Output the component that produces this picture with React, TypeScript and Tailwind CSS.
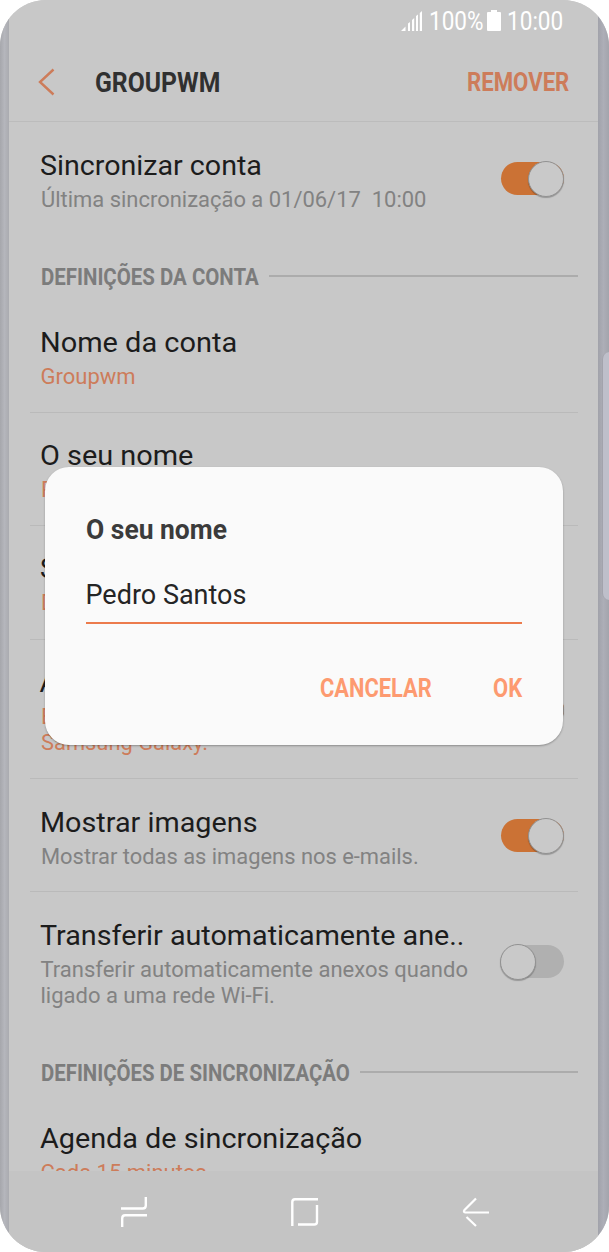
import { FC, ReactNode, useLayoutEffect, useRef, useState } from "react";
import clsx from "clsx";

interface FitTextProps {
  width: number;
  className?: string;
  children: ReactNode;
}

// Narrows or widens a single line of text to the given width
const FitText: FC<FitTextProps> = ({ width, className, children }) => {
  const ref = useRef<HTMLSpanElement>(null);
  const [scale, setScale] = useState(1);

  useLayoutEffect(() => {
    if (ref.current) {
      setScale(width / ref.current.offsetWidth);
    }
  }, [width]);

  return (
    <div className={clsx("whitespace-pre", className)} style={{ width }}>
      <span
        ref={ref}
        className="inline-block origin-left"
        style={{ transform: `scaleX(${scale})` }}
      >
        {children}
      </span>
    </div>
  );
};

interface SwitchProps {
  on: boolean;
}

const Switch: FC<SwitchProps> = ({ on }) => (
  <div
    className={clsx(
      "flex h-[33px] w-[63px] items-center rounded-full",
      on ? "justify-end bg-[#cb7235]" : "bg-[#b0b0b0]"
    )}
  >
    <div
      className={clsx(
        "size-9 shrink-0 rounded-full border border-[#929292] bg-[#c9c9c9] shadow-[0_1px_1px_rgba(0,0,0,0.25)]",
        !on && "-ml-px"
      )}
    />
  </div>
);

interface SettingProps {
  title: string;
  titleWidth: number;
  lines: [string, number][];
  accent?: boolean;
  toggle?: boolean;
  className: string;
  switchClassName?: string;
}

const Setting: FC<SettingProps> = ({
  title,
  titleWidth,
  lines,
  accent,
  toggle,
  className,
  switchClassName = "mt-10",
}) => (
  <div className={clsx("flex shrink-0 justify-between pl-[10.5px]", className)}>
    <div className={accent ? "pt-[26px]" : "pt-[27px]"}>
      <FitText
        width={titleWidth}
        className="mb-1 -ml-px text-[28.5px] leading-[34px] text-[#1c1c1c]"
      >
        {title}
      </FitText>
      {lines.map(([line, width]) => (
        <FitText
          key={line}
          width={width}
          className={clsx(
            "text-[22px] leading-[26px]",
            accent ? "text-[#cd7c5a]" : "text-[#828282]"
          )}
        >
          {line}
        </FitText>
      ))}
    </div>
    {toggle !== undefined && (
      <div className={clsx("mr-[14.5px]", switchClassName)}>
        <Switch on={toggle} />
      </div>
    )}
  </div>
);

interface SectionProps {
  width: number;
  children: string;
}

const Section: FC<SectionProps> = ({ width, children }) => (
  <div className="flex h-12 shrink-0 items-center gap-[10px] pl-[10.5px]">
    <FitText
      width={width}
      className="mt-px text-[24px] leading-8 font-bold text-[#7c7c7c]"
    >
      {children}
    </FitText>
    <div className="h-[2px] flex-1 bg-[#acacac]" />
  </div>
);

const StatusBar = () => (
  <div className="flex h-[42px] justify-end pr-[35px] text-[25px] leading-[44px] text-white">
    <svg className="mt-[11px] mr-[7px] h-5 w-[21px]" viewBox="0 0 21 20" fill="white">
      <path d="M0 20 4.5 15.5V20ZM7 12.5 9 11V20H7ZM11 9 13.2 7V20H11ZM15 5 17 3.5V20H15ZM18.8 2 21 0V20H18.8Z" />
    </svg>
    <FitText width={54}>100%</FitText>
    <svg className="mt-[10px] mr-[6px] ml-[4px] h-[21px] w-[14px]" viewBox="0 0 14 21" fill="white">
      <path d="M4 0h6v2h3a1 1 0 0 1 1 1v17a1 1 0 0 1-1 1H1a1 1 0 0 1-1-1V3a1 1 0 0 1 1-1h3z" />
    </svg>
    <FitText width={56}>10:00</FitText>
  </div>
);

const NavBar = () => (
  <div className="flex h-[81px] shrink-0 items-start bg-[#c4c4c4] pt-[26px] pl-[111px]">
    <svg className="h-8 w-[28px]" viewBox="0 0 28 32" fill="none" stroke="white" strokeWidth="2.4">
      <path d="M25.8 0v8.500q0 3-3 3H1M2.200 30v-8.500q0-3.200 3-3.200H27" />
    </svg>
    <svg className="mt-px ml-[143px] h-[30px] w-[28px]" viewBox="0 0 28 30" fill="none" stroke="white" strokeWidth="2.4">
      <path d="M1.300 28V4q0-2.700 2.700-2.700H27M26 7v16.800q0 2.700-2.700 2.700H7" />
    </svg>
    <svg className="ml-[143px] h-8 w-[28px]" viewBox="0 0 28 32" fill="none" stroke="white" strokeWidth="2.2">
      <path d="M14 1.500 2.500 13q-1.500 2 .8 2.500H27M4.500 20 14 29" />
    </svg>
  </div>
);

const NameDialog = () => (
  <div className="absolute top-[466.5px] left-[45px] h-[278px] w-[518px] rounded-[24px] bg-[#fafafa] px-[41px] pt-[46.5px] shadow-[0_1px_2px_rgba(0,0,0,0.3)]">
    <FitText
      width={141}
      className="text-[28.5px] leading-[34px] font-bold text-[#3b3b3b]"
    >
      O seu nome
    </FitText>
    <div className="mt-[31px] h-[46px] border-b-2 border-[#ec7b4c]">
      <FitText
        width={161}
        className="-ml-[0.5px] text-[27px] leading-[34px] text-[#252525]"
      >
        Pedro Santos
      </FitText>
    </div>
    <div className="mt-[49px] flex justify-end gap-[61px] text-[25px] leading-[32px] font-bold text-[#fd9a70]">
      <FitText width={112}>CANCELAR</FitText>
      <FitText width={29}>OK</FitText>
    </div>
  </div>
);

export default function App() {
  return (
    <div className="h-[1252px] w-[609px] bg-white font-['Roboto',sans-serif]">
      <div className="relative flex h-full overflow-hidden rounded-[46px] bg-[#c8c8c8]">
        <div className="w-[9px] shrink-0 bg-linear-to-r from-[#a6a7ac] via-[#b5b6bc] to-[#aaabb0]" />
        <div className="flex w-[589px] shrink-0 flex-col bg-[#c8c8c8]">
          <StatusBar />
          <header className="flex h-20 shrink-0 items-center border-b border-[#bcbcbc] pr-[29px] pl-[29px]">
            <svg className="mr-10 h-7 w-[17px]" viewBox="0 0 17 28" fill="none" stroke="#cd7c5a" strokeWidth="2.4">
              <path d="M15.500 1.500 2 14 15.500 26.500" />
            </svg>
            <FitText
              width={125}
              className="mt-[2px] text-[28.5px] leading-9 font-bold text-[#303030]"
            >
              GROUPWM
            </FitText>
            <FitText
              width={102}
              className="mt-[3px] ml-auto text-[25px] leading-8 font-bold text-[#cd7c5a]"
            >
              REMOVER
            </FitText>
          </header>
          <main className="flex h-[1049px] flex-col overflow-hidden pr-5 pl-[21px]">
            <Setting
              className="h-[130px]"
              title="Sincronizar conta"
              titleWidth={222}
              lines={[["Última sincronização a 01/06/17  10:00", 385]]}
              toggle
            />
            <Section width={218}>DEFINIÇÕES DA CONTA</Section>
            <Setting
              className="h-[113px] border-b border-[#bababa]"
              title="Nome da conta"
              titleWidth={197}
              lines={[["Groupwm", 95]]}
              accent
            />
            <Setting
              className="h-[113px] border-b border-[#bababa]"
              title="O seu nome"
              titleWidth={153}
              lines={[["Pedro Santos", 130]]}
              accent
            />
            <Setting
              className="h-[114px] border-b border-[#bababa]"
              title="Sempre Cc/Bcc para mim"
              titleWidth={310}
              lines={[["Desactivado", 118]]}
              accent
            />
            <Setting
              className="h-[139px] border-b border-[#bababa]"
              title="Assinatura"
              titleWidth={136}
              lines={[
                ["Enviado a partir do meu smartphone", 360],
                ["Samsung Galaxy.", 167],
              ]}
              accent
              toggle
              switchClassName="mt-[53px]"
            />
            <Setting
              className="h-[113px] border-b border-[#bababa]"
              title="Mostrar imagens"
              titleWidth={218}
              lines={[["Mostrar todas as imagens nos e-mails.", 378]]}
              toggle
            />
            <Setting
              className="h-[156px]"
              title="Transferir automaticamente ane.."
              titleWidth={424}
              lines={[
                ["Transferir automaticamente anexos quando", 427],
                ["ligado a uma rede Wi-Fi.", 234],
              ]}
              toggle={false}
              switchClassName="mt-[53px]"
            />
            <Section width={309}>DEFINIÇÕES DE SINCRONIZAÇÃO</Section>
            <Setting
              className="h-[113px]"
              title="Agenda de sincronização"
              titleWidth={322}
              lines={[["Cada 15 minutos", 166]]}
              accent
            />
          </main>
          <NavBar />
        </div>
        <div className="w-[11px] shrink-0 bg-linear-to-r from-[#a1a2aa] via-[#adaeb7] to-[#a3a4ac] pt-[352px]">
          <div className="ml-1 h-[248px] w-[7px] rounded-l-[7px] border-l border-[#a2a3ac] bg-[#bebfca]" />
        </div>
        <NameDialog />
      </div>
    </div>
  );
}
